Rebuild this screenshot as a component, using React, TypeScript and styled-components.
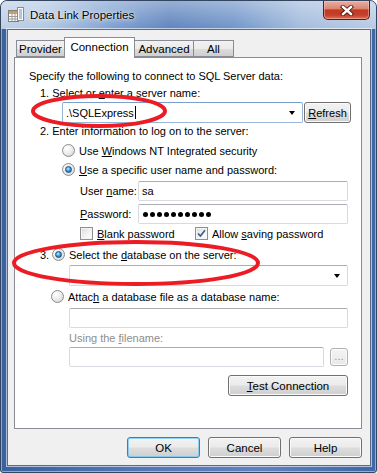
import styled, { createGlobalStyle } from 'styled-components'

const GlobalStyle = createGlobalStyle`
  html, body {
    margin: 0;
    padding: 0;
    background: #ffffff;
  }
  body {
    font-family: "Liberation Sans", Arial, sans-serif;
    font-size: 11px;
    color: #000;
  }
`

const Window = styled.div`
  position: relative;
  width: 377px;
  height: 473px;
  box-sizing: border-box;
  border: 1px solid #34465f;
  border-radius: 7px 7px 3px 3px;
  background: linear-gradient(to right, #3a61a0 0%, #5479b5 40%, #5d82bd 70%, #3f67a6 100%);
  box-shadow: inset 0 0 0 1px rgba(255, 255, 255, 0.45);
  display: flex;
  flex-direction: column;
  overflow: hidden;
`

const TitleBar = styled.div`
  height: 28px;
  flex-shrink: 0;
  display: flex;
  align-items: center;
  padding-left: 7px;
  background:
    linear-gradient(to bottom, rgba(255, 255, 255, 0.35), rgba(255, 255, 255, 0) 100%),
    linear-gradient(to right, #bdcfe6 0%, #b2c7e2 12%, #7d9fd0 30%, #5f84bd 45%, #7095c9 62%, #a3bcdd 80%, #b8cbe4 100%);
`

const TitleText = styled.div`
  margin-left: 6px;
  font-size: 11.5px;
  color: #000;
  text-shadow: 0 0 6px rgba(255, 255, 255, 0.9), 0 0 2px rgba(255, 255, 255, 0.8);
  flex: 1;
`

const CloseButton = styled.div`
  align-self: flex-start;
  width: 47px;
  height: 19px;
  margin-right: 6px;
  box-sizing: border-box;
  border: 1px solid #5b1a12;
  border-top: none;
  border-radius: 0 0 5px 5px;
  background: linear-gradient(to bottom, #eab0a2 0%, #dc8672 42%, #c13a22 50%, #c5402a 78%, #de7058 100%);
  box-shadow: inset 0 0 0 1px rgba(255, 210, 200, 0.45);
  display: flex;
  align-items: center;
  justify-content: center;
`

const Client = styled.div`
  flex: 1;
  margin: 0 5px 6px 6px;
  background: #f0f0f0;
  border: 1px solid #5b6b80;
  box-shadow: 0 0 0 1px rgba(255, 255, 255, 0.6);
  display: flex;
  flex-direction: column;
  padding: 7px 8px 0 6px;
`

const TabRow = styled.div`
  display: flex;
  align-items: flex-end;
  height: 20px;
  padding-left: 2px;
  position: relative;
  z-index: 1;
`

const Tab = styled.div<{ $w: number; $active?: boolean }>`
  width: ${({ $w }) => $w}px;
  height: ${({ $active }) => ($active ? 21 : 17)}px;
  margin-bottom: ${({ $active }) => ($active ? -1 : 0)}px;
  margin-left: ${({ $active }) => ($active ? -1 : 0)}px;
  box-sizing: border-box;
  border: 1px solid #898c95;
  border-bottom: ${({ $active }) => ($active ? 'none' : '1px solid #898c95')};
  border-left: ${({ $active }) => ($active ? '1px solid #898c95' : 'none')};
  background: ${({ $active }) =>
    $active ? '#ffffff' : 'linear-gradient(to bottom, #f2f2f2 0%, #ebebeb 50%, #dddddd 51%, #cfcfcf 100%)'};
  display: flex;
  align-items: center;
  justify-content: center;
  padding-bottom: ${({ $active }) => ($active ? 2 : 0)}px;
  font-size: 11.5px;

  &:first-child {
    border-left: 1px solid #898c95;
  }
`

const Panel = styled.div`
  height: 372px;
  box-sizing: border-box;
  background: #ffffff;
  border: 1px solid #898c95;
  padding: 11px 13px 0 0;
  display: flex;
  flex-direction: column;
`

const Line = styled.div<{ $top: number; $indent: number; $muted?: boolean }>`
  margin-top: ${({ $top }) => $top}px;
  padding-left: ${({ $indent }) => $indent}px;
  height: 15px;
  line-height: 15px;
  white-space: nowrap;
  color: ${({ $muted }) => ($muted ? '#8d8d8d' : '#000')};
`

const OptionRow = styled.div<{ $top: number; $indent: number }>`
  margin-top: ${({ $top }) => $top}px;
  padding-left: ${({ $indent }) => $indent}px;
  height: 15px;
  display: flex;
  align-items: center;
  gap: 4px;
  white-space: nowrap;
`

const Step = styled.span`
  width: 8px;
`

const FieldRow = styled.div<{ $top: number; $indent: number; $h?: number }>`
  margin-top: ${({ $top }) => $top}px;
  padding-left: ${({ $indent }) => $indent}px;
  height: ${({ $h }) => $h ?? 20}px;
  display: flex;
  align-items: center;
  white-space: nowrap;
`

const Label = styled.span<{ $w: number }>`
  width: ${({ $w }) => $w}px;
  flex-shrink: 0;
  display: flex;
  align-items: center;
  gap: 4px;
`

const Key = styled.span`
  text-decoration: underline;
`

const TextBox = styled.div<{ $w?: number; $focus?: boolean }>`
  ${({ $w }) => ($w ? `width: ${$w}px; flex-shrink: 0;` : 'flex: 1;')}
  height: 100%;
  box-sizing: border-box;
  border: 1px solid ${({ $focus }) => ($focus ? '#98b8db' : '#d7dae0')};
  border-top-color: ${({ $focus }) => ($focus ? '#7a9fcb' : '#abadb3')};
  border-radius: 2px;
  background: #ffffff;
  display: flex;
  align-items: center;
  padding: 0 7px 0 3px;
`

const BoxText = styled.span`
  flex: 1;
  display: flex;
  align-items: center;
`

const Caret = styled.span`
  width: 1px;
  height: 13px;
  background: #000;
  margin-left: 1px;
`

const Arrow = styled.span`
  width: 0;
  height: 0;
  border-left: 3.5px solid transparent;
  border-right: 3.5px solid transparent;
  border-top: 4px solid #000;
`

const Dots = styled.span`
  display: flex;
  gap: 2px;
  padding-left: 1px;
`

const Dot = styled.span`
  width: 5px;
  height: 5px;
  border-radius: 50%;
  background: #000;
`

const Radio = styled.span<{ $on?: boolean }>`
  width: 13px;
  height: 13px;
  box-sizing: border-box;
  flex-shrink: 0;
  border-radius: 50%;
  border: 1px solid #8b8b8b;
  background: radial-gradient(circle at 35% 30%, #ffffff 0%, #eeeeee 45%, #cfcfcf 100%);
  display: flex;
  align-items: center;
  justify-content: center;

  &::after {
    content: '';
    display: ${({ $on }) => ($on ? 'block' : 'none')};
    width: 7px;
    height: 7px;
    box-sizing: border-box;
    border-radius: 50%;
    border: 1px solid #1b4a7c;
    background: radial-gradient(circle at 40% 35%, #bdf0ff 0%, #3fa2e6 45%, #16548f 100%);
  }
`

const Check = styled.span`
  width: 13px;
  height: 13px;
  box-sizing: border-box;
  flex-shrink: 0;
  border: 1px solid #8e8f8f;
  background: linear-gradient(135deg, #dcdcdc 0%, #f4f4f4 60%, #ffffff 100%);
  box-shadow: inset 0 0 0 1px #f4f4f4;
  display: flex;
  align-items: center;
  justify-content: center;
`

const Button = styled.div<{ $w: number; $primary?: boolean; $muted?: boolean }>`
  width: ${({ $w }) => $w}px;
  height: 21px;
  box-sizing: border-box;
  flex-shrink: 0;
  border: 1px solid ${({ $primary }) => ($primary ? '#3c7fb1' : '#707070')};
  border-radius: 3px;
  background: linear-gradient(to bottom, #f2f2f2 0%, #ebebeb 48%, #dddddd 52%, #cfcfcf 100%);
  box-shadow: inset 0 0 0 1px ${({ $primary }) => ($primary ? 'rgba(110, 200, 245, 0.75)' : '#fbfbfb')};
  display: flex;
  align-items: center;
  justify-content: center;
  font-size: 11.5px;
  color: ${({ $muted }) => ($muted ? '#9a9a9a' : '#000')};
`

const RefreshButton = styled(Button)`
  margin-left: 1px;
  font-size: 11px;
`

const SmallButton = styled(Button)`
  height: 18px;
  margin-left: 6px;
  border-color: #adb2b5;
  background: linear-gradient(to bottom, #f4f4f4, #e8e8e8);
  align-items: flex-end;
  padding-bottom: 3px;
`

const ActionRow = styled.div`
  margin-top: 8px;
  display: flex;
  justify-content: flex-end;
`

const Footer = styled.div`
  margin-top: 8px;
  display: flex;
  justify-content: flex-end;
  gap: 8px;
`

const Marks = styled.svg`
  position: absolute;
  left: 0;
  top: 0;
  pointer-events: none;
`

const AppIcon = () => (
  <svg width="16" height="16" viewBox="0 0 16 16">
    <rect x="0.5" y="3.5" width="10" height="11" fill="#fff" stroke="#7d7d7d" />
    <rect x="1" y="4" width="9" height="3" fill="#e59a4c" />
    <path d="M1 9.5h9M1 12h9M4 4v10M7 4v10" stroke="#9a9a9a" strokeWidth="1" />
    <rect x="9.5" y="0.5" width="6" height="13" fill="#fafafa" stroke="#8c8c8c" />
    <path d="M11 3h3M11 5h3M11 7h3M11 9h3M11 11h3" stroke="#6c8fc0" strokeWidth="1" />
  </svg>
)

const CloseGlyph = () => (
  <svg width="14" height="11" viewBox="0 0 14 11">
    <path d="M3 2l8 7M11 2l-8 7" stroke="#4a1510" strokeWidth="4.2" strokeLinecap="square" />
    <path d="M3 2l8 7M11 2l-8 7" stroke="#ffffff" strokeWidth="2.4" strokeLinecap="square" />
  </svg>
)

const Tick = () => (
  <svg width="9" height="9" viewBox="0 0 9 9">
    <path d="M1 4.5l2.4 2.6L8 1.2" fill="none" stroke="#3c5a8e" strokeWidth="1.6" />
  </svg>
)

export default function App() {
  return (
    <>
      <GlobalStyle />
      <Window>
        <TitleBar>
          <AppIcon />
          <TitleText>Data Link Properties</TitleText>
          <CloseButton>
            <CloseGlyph />
          </CloseButton>
        </TitleBar>
        <Client>
          <TabRow>
            <Tab $w={49}>Provider</Tab>
            <Tab $w={71} $active>
              Connection
            </Tab>
            <Tab $w={59}>Advanced</Tab>
            <Tab $w={40}>All</Tab>
          </TabRow>
          <Panel>
            <Line $top={0} $indent={14}>
              Specify the following to connect to SQL Server data:
            </Line>
            <Line $top={2} $indent={25}>
              1. Select or <Key>e</Key>nter a server name:
            </Line>
            <FieldRow $top={1} $indent={47} $h={21}>
              <TextBox $w={241} $focus>
                <BoxText>
                  .\SQLExpress
                  <Caret />
                </BoxText>
                <Arrow />
              </TextBox>
              <RefreshButton $w={47}>
                <span>
                  <Key>R</Key>efresh
                </span>
              </RefreshButton>
            </FieldRow>
            <Line $top={1} $indent={25}>
              2. Enter information to log on to the server:
            </Line>
            <OptionRow $top={4} $indent={47}>
              <Radio />
              <span>
                Use <Key>W</Key>indows NT Integrated security
              </span>
            </OptionRow>
            <OptionRow $top={4} $indent={47}>
              <Radio $on />
              <span>
                <Key>U</Key>se a specific user name and password:
              </span>
            </OptionRow>
            <FieldRow $top={4} $indent={65}>
              <Label $w={58}>
                <span>
                  User <Key>n</Key>ame:
                </span>
              </Label>
              <TextBox>
                <BoxText>sa</BoxText>
              </TextBox>
            </FieldRow>
            <FieldRow $top={3} $indent={65}>
              <Label $w={58}>
                <span>
                  <Key>P</Key>assword:
                </span>
              </Label>
              <TextBox>
                <Dots>
                  {Array.from({ length: 10 }, (_, i) => (
                    <Dot key={i} />
                  ))}
                </Dots>
              </TextBox>
            </FieldRow>
            <FieldRow $top={2} $indent={65} $h={15}>
              <Label $w={115}>
                <Check />
                <span>
                  <Key>B</Key>lank password
                </span>
              </Label>
              <Label $w={150}>
                <Check>
                  <Tick />
                </Check>
                <span>
                  Allow <Key>s</Key>aving password
                </span>
              </Label>
            </FieldRow>
            <OptionRow $top={6} $indent={25}>
              <Step>3.</Step>
              <Radio $on />
              <span>
                Select the <Key>d</Key>atabase on the server:
              </span>
            </OptionRow>
            <FieldRow $top={3} $indent={54} $h={21}>
              <TextBox>
                <BoxText />
                <Arrow />
              </TextBox>
            </FieldRow>
            <OptionRow $top={3} $indent={36}>
              <Radio />
              <span>
                Attac<Key>h</Key> a database file as a database name:
              </span>
            </OptionRow>
            <FieldRow $top={4} $indent={54}>
              <TextBox />
            </FieldRow>
            <Line $top={3} $indent={54} $muted>
              Using the <Key>f</Key>ilename:
            </Line>
            <FieldRow $top={1} $indent={54}>
              <TextBox />
              <SmallButton $w={18} $muted>
                ...
              </SmallButton>
            </FieldRow>
            <ActionRow>
              <Button $w={120}>
                <span>
                  <Key>T</Key>est Connection
                </span>
              </Button>
            </ActionRow>
          </Panel>
          <Footer>
            <Button $w={73} $primary>
              OK
            </Button>
            <Button $w={73}>Cancel</Button>
            <Button $w={73}>Help</Button>
          </Footer>
        </Client>
        <Marks width="377" height="473" viewBox="0 0 377 473">
          <ellipse cx="98" cy="110" rx="66" ry="15" fill="none" stroke="#ec1c24" strokeWidth="4" />
          <ellipse cx="135" cy="262" rx="122" ry="21" fill="none" stroke="#ec1c24" strokeWidth="4" />
        </Marks>
      </Window>
    </>
  )
}
